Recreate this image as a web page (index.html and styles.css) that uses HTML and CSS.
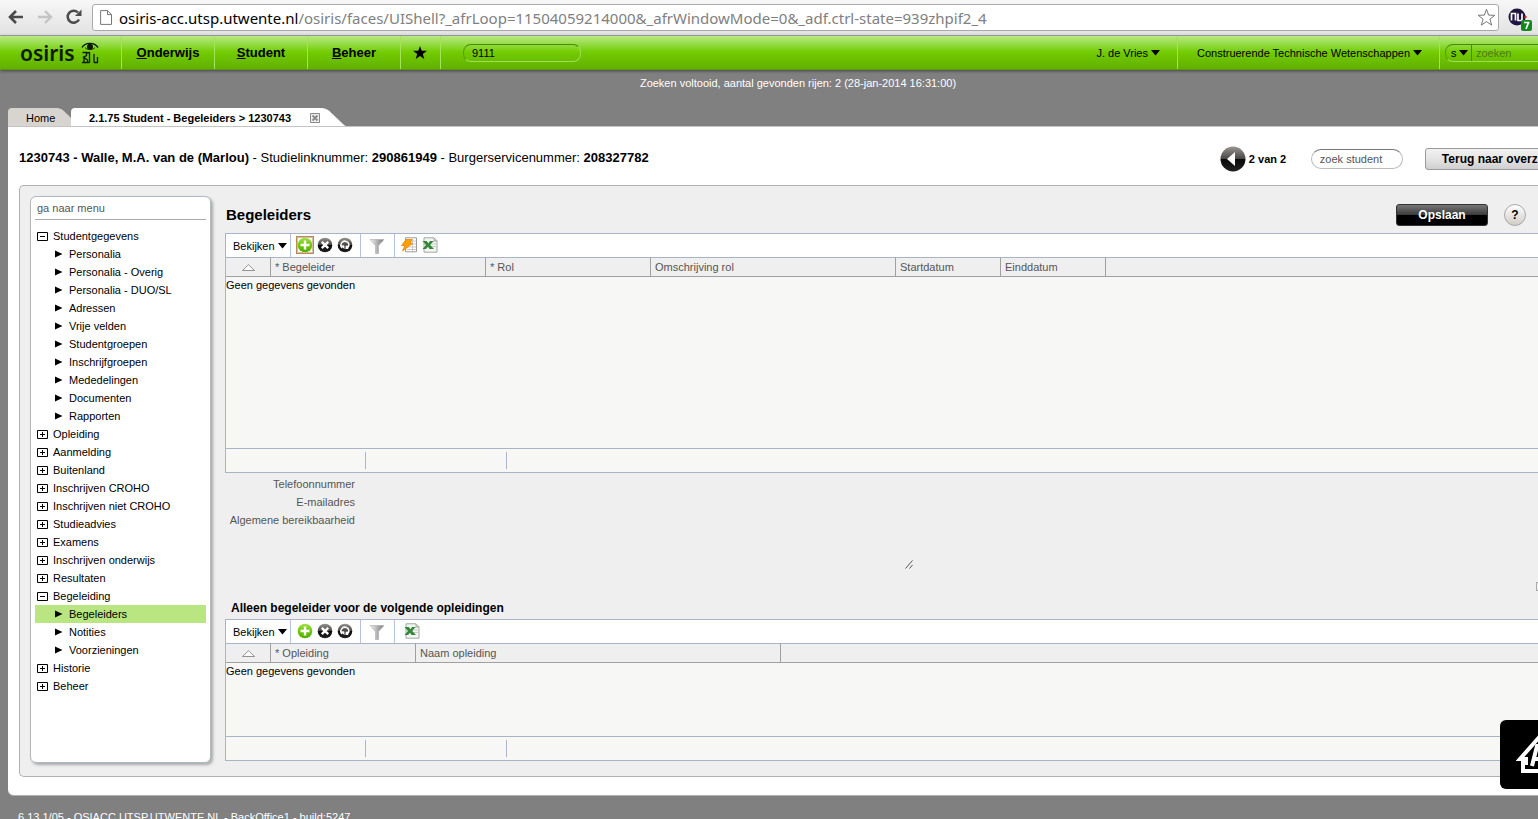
FILE: index.html
```html
<!DOCTYPE html>
<html lang="nl">
<head>
<meta charset="utf-8">
<title>Osiris - Begeleiders</title>
<link rel="stylesheet" href="styles.css">
</head>
<body>
<svg class="defs" aria-hidden="true">
  <defs>
    <linearGradient id="gGreen" x1="0" y1="0" x2="0" y2="1"><stop offset="0" stop-color="#a4e04e"/><stop offset=".5" stop-color="#6cc80c"/><stop offset="1" stop-color="#4fae00"/></linearGradient>
    <linearGradient id="gBlack" x1="0" y1="0" x2="0" y2="1"><stop offset="0" stop-color="#9a9692"/><stop offset=".48" stop-color="#4a4846"/><stop offset=".52" stop-color="#0a0a0a"/><stop offset="1" stop-color="#222"/></linearGradient>
    <linearGradient id="gFunnel"><stop offset="0" stop-color="#f4f4f4"/><stop offset=".5" stop-color="#b4b4b4"/><stop offset="1" stop-color="#777"/></linearGradient>
  </defs>
  <symbol id="i-add" viewBox="0 0 16 16"><circle cx="8" cy="8" r="7.300" fill="url(#gGreen)"/><path d="M8 3.500v9M3.500 8h9" stroke="#fff" stroke-width="2.400"/></symbol>
  <symbol id="i-del" viewBox="0 0 16 16"><circle cx="8" cy="8" r="7.300" fill="url(#gBlack)"/><path d="M4.800 4.800l6.400 6.400M11.200 4.800l-6.400 6.400" stroke="#fff" stroke-width="2.400"/></symbol>
  <symbol id="i-undo" viewBox="0 0 16 16"><circle cx="8" cy="8" r="7.300" fill="url(#gBlack)"/><path d="M5.200 11A3.900 3.900 0 1 1 11.500 9.500" fill="none" stroke="#fff" stroke-width="1.500"/><path d="M3.500 8.300h4v4z M8.500 8.500h4l-1.500 3.500h-2.500z" fill="#fff"/></symbol>
  <symbol id="i-filter" viewBox="0 0 16 16"><path d="M1 1.500h14l-5.500 6v8h-3v-8z" fill="url(#gFunnel)" stroke="#aaa" stroke-width=".6"/></symbol>
  <symbol id="i-flash" viewBox="0 0 16 16"><path d="M4.500.8h11v14h-11z" fill="#fff" stroke="#9a9a9a"/><path d="M6 4h9M6 7h9M6 10h9M6 12.500h9M11.500 2v12" stroke="#c8c8c8"/><path d="M5 2.500h6L9 6.500h2.500L1.500 14l2.500-5.500H.5z" fill="#ffa200" stroke="#e87800" stroke-width=".7"/></symbol>
  <symbol id="i-xls" viewBox="0 0 16 16"><path d="M2 .8h10l3 3v11.400H2z" fill="#f4f5f3" stroke="#a3a7a3"/><path d="M12 .8v3h3" fill="none" stroke="#a3a7a3"/><path d="M8.500 4.500H14M8.500 7H14M8.500 9.500H14" stroke="#c5cfc5"/><path d="M.5 4h4.200l1.800 2.200L8 4h3.500L8.200 8l3.800 4H7.500L6 9.800 4 12H.5L4 8z" fill="#35883a"/></symbol>
  <symbol id="i-caret" viewBox="0 0 9 6"><path d="M0 0h9L4.500 5.500z" fill="currentColor"/></symbol>
  <symbol id="i-leaf" viewBox="0 0 8 8"><path d="M0 .5v7L7.500 4z"/></symbol>
  <symbol id="i-plus" viewBox="0 0 11 9"><path d="M.5.5h10v8H.5z" fill="#fff" stroke="#000"/><path d="M3 4.500h5M5.500 2v5" stroke="#000"/></symbol>
  <symbol id="i-minus" viewBox="0 0 11 9"><path d="M.5.5h10v8H.5z" fill="#fff" stroke="#000"/><path d="M3 4.500h5" stroke="#000"/></symbol>
  <symbol id="i-sort" viewBox="0 0 13 7"><path d="M.5 6.500L6.500.7l6 5.800z" fill="#fff" stroke="#777" stroke-width=".8"/></symbol>
</svg>

<div class="browser">
  <button class="bnav" aria-label="Terug"><svg width="16" height="14" viewBox="0 0 16 14"><path d="M8 1L2 7l6 6M2 7h13" fill="none" stroke="#4b4b4b" stroke-width="2.600"/></svg></button>
  <button class="bnav" aria-label="Vooruit"><svg width="16" height="14" viewBox="0 0 16 14"><path d="M8 1l6 6-6 6M14 7H1" fill="none" stroke="#c4c4c4" stroke-width="2.400"/></svg></button>
  <button class="bnav" aria-label="Vernieuwen"><svg width="16" height="16" viewBox="0 0 16 16"><path d="M13 10.500A6 6 0 1 1 12 3.500" fill="none" stroke="#4b4b4b" stroke-width="2.500"/><path d="M15.500.5v6.500H9z" fill="#4b4b4b"/></svg></button>
  <div class="address">
    <svg width="12" height="15" viewBox="0 0 12 15"><path d="M.6.600h6.900l4 4v9.800H.6zM7.500.600v4h4" fill="#fff" stroke="#777"/></svg>
    <p class="url"><span>osiris-acc.utsp.utwente.nl</span>/osiris/faces/UIShell?_afrLoop=11504059214000&amp;_afrWindowMode=0&amp;_adf.ctrl-state=939zhpif2_4</p>
    <svg width="19" height="19" viewBox="0 0 19 19"><path d="M9.500 1.200l2.100 5.900 6.200.2-4.900 3.800 1.800 6-5.200-3.500-5.200 3.500 1.800-6L1.200 7.300l6.200-.2z" fill="#fff" stroke="#777" stroke-linejoin="round"/></svg>
  </div>
  <svg class="ext" width="26" height="24" viewBox="0 0 26 24"><circle cx="9" cy="9" r="8.500" fill="#201540"/><path d="M3.500 12.500v-7h4v7M10 5.500v7h4v-7" fill="none" stroke="#fff" stroke-width="1.700"/><circle cx="17.500" cy="9" r="1.200" fill="#e8212a"/><rect x="13" y="12" width="11" height="11" rx="2" fill="#118a1a"/><path d="M16 14.500h4.500l-2.500 6.500" fill="none" stroke="#fff" stroke-width="1.700"/></svg>
</div>

<div class="app">
  <header class="top">
    <a class="logo" href="#">osiris<svg width="18" height="22" viewBox="0 0 18 22"><path d="M1 5.500C4 .5 13-.5 17 5.500" fill="none" stroke="#0b1a00" stroke-width="1.400"/><circle cx="9" cy="4.800" r="3" fill="#0b1a00"/><path d="M4 5.500c2 2.800 8 2.800 10 0" fill="none" stroke="#0b1a00" stroke-width=".8"/><path d="M1.500 10.500h4v3l-3 1.500 4 3v2.500M3 15.500v4.500M8.500 10v10.500M5.500 11l3-.5M13 12v8.500M16.500 15v5.500M1 20.500h7.500M13 20.500h4" fill="none" stroke="#0b1a00" stroke-width="1.300"/></svg></a>
    <nav class="nav">
      <a href="#"><u>O</u>nderwijs</a>
      <a href="#"><u>S</u>tudent</a>
      <a href="#"><u>B</u>eheer</a>
      <a class="fav" href="#" aria-label="Favorieten"><svg width="14" height="13" viewBox="0 0 14 13"><path d="M7 0l1.700 4.800H14L9.800 7.900l1.500 5L7 9.900l-4.300 3 1.500-5L0 4.800h5.300z"/></svg></a>
    </nav>
    <input class="code" type="text" value="9111" aria-label="Schermcode">
    <div class="user">
      <button>J. de Vries <svg class="caret"><use href="#i-caret"/></svg></button>
      <button>Construerende Technische Wetenschappen <svg class="caret"><use href="#i-caret"/></svg></button>
      <div class="find">
        <label class="kind"><select aria-label="Zoeken in"><option>s</option></select><svg class="caret"><use href="#i-caret"/></svg></label>
        <input type="text" placeholder="zoeken" aria-label="Zoeken">
      </div>
    </div>
  </header>

  <p class="status">Zoeken voltooid, aantal gevonden rijen: 2 (28-jan-2014 16:31:00)</p>

  <div class="tabs">
    <a class="tab home" href="#"><span>Home</span><svg width="14" height="18" viewBox="0 0 14 18"><path d="M0 0C5 0 8 4 14 10V18H0z"/></svg></a>
    <div class="tab active"><a href="#">2.1.75 Student - Begeleiders &gt; 1230743</a><button aria-label="Tabblad sluiten"><svg width="10" height="10" viewBox="0 0 10 10"><path class="x" d="M.5.5h9v9h-9z" stroke="#888"/><path d="M2.500 2.500l5 5M7.500 2.500l-5 5" stroke="#888" stroke-width="1.800"/></svg></button><svg width="25" height="18" viewBox="0 0 25 18"><path d="M0 0C7 0 9 4 12 6.500L22 16Q24 18 25 18H0z"/></svg></div>
  </div>

  <div class="sheet">
    <div class="record">
      <p class="who"><b>1230743 - Walle, M.A. van de (Marlou)</b> - Studielinknummer: <b>290861949</b> - Burgerservicenummer: <b>208327782</b></p>
      <button class="prev" aria-label="Vorige"><svg width="26" height="26" viewBox="0 0 26 26"><circle cx="13" cy="13" r="12.500" fill="url(#gBlack)"/><path d="M7 13l8-7v14z" fill="#fff"/></svg></button>
      <b class="pos">2 van 2</b>
      <input class="zoek" type="text" placeholder="zoek student" aria-label="Zoek student">
      <button class="back">Terug naar overzicht</button>
    </div>

    <div class="panel">
      <aside class="side">
        <input class="goto" type="text" placeholder="ga naar menu" aria-label="Ga naar menu">
        <ul class="tree">
          <li><a href="#"><svg class="box"><use href="#i-minus"/></svg>Studentgegevens</a>
            <ul>
              <li><a href="#"><svg class="leaf"><use href="#i-leaf"/></svg>Personalia</a></li>
              <li><a href="#"><svg class="leaf"><use href="#i-leaf"/></svg>Personalia - Overig</a></li>
              <li><a href="#"><svg class="leaf"><use href="#i-leaf"/></svg>Personalia - DUO/SL</a></li>
              <li><a href="#"><svg class="leaf"><use href="#i-leaf"/></svg>Adressen</a></li>
              <li><a href="#"><svg class="leaf"><use href="#i-leaf"/></svg>Vrije velden</a></li>
              <li><a href="#"><svg class="leaf"><use href="#i-leaf"/></svg>Studentgroepen</a></li>
              <li><a href="#"><svg class="leaf"><use href="#i-leaf"/></svg>Inschrijfgroepen</a></li>
              <li><a href="#"><svg class="leaf"><use href="#i-leaf"/></svg>Mededelingen</a></li>
              <li><a href="#"><svg class="leaf"><use href="#i-leaf"/></svg>Documenten</a></li>
              <li><a href="#"><svg class="leaf"><use href="#i-leaf"/></svg>Rapporten</a></li>
            </ul>
          </li>
          <li><a href="#"><svg class="box"><use href="#i-plus"/></svg>Opleiding</a></li>
          <li><a href="#"><svg class="box"><use href="#i-plus"/></svg>Aanmelding</a></li>
          <li><a href="#"><svg class="box"><use href="#i-plus"/></svg>Buitenland</a></li>
          <li><a href="#"><svg class="box"><use href="#i-plus"/></svg>Inschrijven CROHO</a></li>
          <li><a href="#"><svg class="box"><use href="#i-plus"/></svg>Inschrijven niet CROHO</a></li>
          <li><a href="#"><svg class="box"><use href="#i-plus"/></svg>Studieadvies</a></li>
          <li><a href="#"><svg class="box"><use href="#i-plus"/></svg>Examens</a></li>
          <li><a href="#"><svg class="box"><use href="#i-plus"/></svg>Inschrijven onderwijs</a></li>
          <li><a href="#"><svg class="box"><use href="#i-plus"/></svg>Resultaten</a></li>
          <li><a href="#"><svg class="box"><use href="#i-minus"/></svg>Begeleiding</a>
            <ul>
              <li><a class="current" href="#"><svg class="leaf"><use href="#i-leaf"/></svg>Begeleiders</a></li>
              <li><a href="#"><svg class="leaf"><use href="#i-leaf"/></svg>Notities</a></li>
              <li><a href="#"><svg class="leaf"><use href="#i-leaf"/></svg>Voorzieningen</a></li>
            </ul>
          </li>
          <li><a href="#"><svg class="box"><use href="#i-plus"/></svg>Historie</a></li>
          <li><a href="#"><svg class="box"><use href="#i-plus"/></svg>Beheer</a></li>
        </ul>
      </aside>

      <main class="main">
        <div class="title">
          <h1>Begeleiders</h1>
          <button class="save">Opslaan</button>
          <button class="help" aria-label="Help">?</button>
        </div>

        <section class="grid">
          <div class="bar">
            <div class="group menu"><button>Bekijken <svg class="caret"><use href="#i-caret"/></svg></button></div>
            <div class="group acts">
              <button class="focus" aria-label="Toevoegen"><svg><use href="#i-add"/></svg></button>
              <button aria-label="Verwijderen"><svg><use href="#i-del"/></svg></button>
              <button aria-label="Herstellen"><svg><use href="#i-undo"/></svg></button>
            </div>
            <div class="group flt"><button aria-label="Filter"><svg><use href="#i-filter"/></svg></button></div>
            <div class="group exp">
              <button aria-label="Actie"><svg><use href="#i-flash"/></svg></button>
              <button aria-label="Exporteren naar Excel"><svg><use href="#i-xls"/></svg></button>
            </div>
          </div>
          <table>
            <colgroup><col class="c45"><col class="c215"><col class="c165"><col class="c245"><col class="c105"><col class="c105"><col></colgroup>
            <thead><tr><th class="sort"><svg><use href="#i-sort"/></svg></th><th><i>*</i> Begeleider</th><th><i>*</i> Rol</th><th>Omschrijving rol</th><th>Startdatum</th><th>Einddatum</th><th></th></tr></thead>
            <tbody><tr><td class="tall" colspan="7">Geen gegevens gevonden</td></tr></tbody>
          </table>
          <div class="foot"><span></span><span></span></div>
        </section>

        <dl class="fields">
          <dt>Telefoonnummer</dt><dd></dd>
          <dt>E-mailadres</dt><dd></dd>
          <dt><label for="bereik">Algemene bereikbaarheid</label></dt>
          <dd><textarea id="bereik"></textarea><svg class="grip" width="9" height="9" viewBox="0 0 9 9"><path d="M.5 8.500l7-8M4.500 8.500l3-3.500" stroke="#555" fill="none"/></svg></dd>
        </dl>
        <div class="more"><button aria-label="Uitklappen"></button></div>

        <h2>Alleen begeleider voor de volgende opleidingen</h2>
        <section class="grid">
          <div class="bar">
            <div class="group menu"><button>Bekijken <svg class="caret"><use href="#i-caret"/></svg></button></div>
            <div class="group acts">
              <button aria-label="Toevoegen"><svg><use href="#i-add"/></svg></button>
              <button aria-label="Verwijderen"><svg><use href="#i-del"/></svg></button>
              <button aria-label="Herstellen"><svg><use href="#i-undo"/></svg></button>
            </div>
            <div class="group flt"><button aria-label="Filter"><svg><use href="#i-filter"/></svg></button></div>
            <div class="group exp single"><button aria-label="Exporteren naar Excel"><svg><use href="#i-xls"/></svg></button></div>
          </div>
          <table>
            <colgroup><col class="c45"><col class="c145"><col class="c365"><col></colgroup>
            <thead><tr><th class="sort"><svg><use href="#i-sort"/></svg></th><th><i>*</i> Opleiding</th><th>Naam opleiding</th><th></th></tr></thead>
            <tbody><tr><td class="short" colspan="4">Geen gegevens gevonden</td></tr></tbody>
          </table>
          <div class="foot"><span></span><span></span></div>
        </section>
      </main>
    </div>
  </div>
  <footer class="version">6.13.1/05 - OSIACC.UTSP.UTWENTE.NL - BackOffice1 - build:5247</footer>
</div>

<div class="badge"><svg width="52" height="44" viewBox="0 0 52 44"><path d="M26 2L4 27h6v4H7v8h38v-8h-3v-4h6z" fill="none" stroke="#fff" stroke-width="4"/><path d="M16 34l5-20h4l2 20M18 27h8" fill="none" stroke="#fff" stroke-width="4"/></svg></div>
</body>
</html>
```
FILE: styles.css
```css
* { box-sizing: border-box; }
body {
  margin: 0;
  height: 100vh;
  overflow: hidden;
  background: #808080;
  color: #000;
  font: 11px/18px "Liberation Sans", Arial, sans-serif;
}
p, h1, h2, ul, dl, dd { margin: 0; padding: 0; }
ul { list-style: none; }
a { color: inherit; text-decoration: none; }
button, input, select, textarea { font: inherit; color: inherit; margin: 0; }
button { border: 0; padding: 0; background: none; }
svg { display: block; flex: none; }
.defs { position: absolute; width: 0; height: 0; }

/* browser bar */
.browser {
  display: flex;
  align-items: center;
  height: 36px;
  padding: 0 0 2px 8px;
  background: linear-gradient(#f7f7f7, #e2e2e2);
  border-bottom: 1px solid #a8a4ac;
}
.bnav { width: 29px; flex: none; }
.address {
  flex: 1;
  display: flex;
  align-items: center;
  height: 27px;
  margin: 2px 7px 0 -3px;
  padding: 0 2px 0 7px;
  background: #fff;
  border: 1px solid #a9a9a9;
  border-radius: 3px;
}
.url {
  flex: 1;
  padding-left: 7px;
  color: #808080;
  font: 15px/24px "Noto Sans", sans-serif;
  white-space: nowrap;
}
.url span { color: #000; }
.ext { margin: 6px 4px 0 2px; }

/* application header */
.app { width: calc(100% + 58px); }
.top {
  display: flex;
  align-items: center;
  height: 34px;
  padding: 0 12px 0 20px;
  background: linear-gradient(#b9e986, #8fda3c 28%, #72cb00 50%, #62b000);
  border-bottom: 1px solid #5a9a10;
  box-shadow: 0 1px 3px #444;
}
.logo {
  display: flex;
  align-items: center;
  gap: 6px;
  width: 101px;
  color: #0b1a00;
  font: 600 21px/30px "Noto Sans", sans-serif;
}
.nav { display: flex; }
.nav a {
  display: flex;
  align-items: center;
  justify-content: center;
  width: 93px;
  height: 33px;
  padding-top: 1px;
  border-left: 1px solid #a5e25a;
  font-size: 13px;
  font-weight: bold;
}
.nav .fav { width: 41px; padding: 0 2px 0 0; border-right: 1px solid #a5e25a; }
.code {
  width: 118px;
  height: 18px;
  margin-left: 22px;
  padding: 0 8px;
  border: 1px solid #9fdd55;
  border-top-color: #4a8a00;
  border-left-color: #5c9a14;
  border-radius: 8px;
  background: none;
}
.user { display: flex; align-items: center; margin-left: auto; }
.user button {
  display: flex;
  align-items: center;
  gap: 3px;
  height: 33px;
  padding: 0 17px 0 19px;
  border-right: 1px solid #a5e25a;
}
.caret { width: 9px; height: 6px; }
.find {
  display: flex;
  width: 139px;
  height: 18px;
  margin-left: 5px;
  border: 1px solid #9fdd55;
  border-top-color: #4a8a00;
  border-left-color: #5c9a14;
  border-radius: 8px;
  overflow: hidden;
}
.kind { display: flex; align-items: center; border-right: 1px solid #4a8a00; padding: 0 3px 0 5px; }
.kind select { appearance: none; width: 8px; border: 0; padding: 0; background: none; }
.find input { width: 100px; border: 0; padding: 0 4px; background: none; }
.find ::placeholder { color: #4d7a1e; }

.status { height: 38px; padding-top: 4px; color: #fff; text-align: center; }

/* tabs */
.tabs { display: flex; padding-left: 8px; height: 18px; }
.tab { display: flex; height: 18px; line-height: 20px; }
.home { width: 63px; }
.home span { flex: 1; padding-left: 18px; background: #d8d5d0; border-radius: 4px 0 0 0; }
.home path { fill: #d8d5d0; }
.active a { padding: 0 19px 0 18px; background: #fff; border-radius: 4px 0 0 0; font-weight: bold; }
.active button { background: #fff; padding: 2px 1px 0 0; }
.active path { fill: #fff; }
.active .x { fill: #eee; }

/* record sheet */
.sheet {
  margin-left: 8px;
  padding: 0 0 18px 11px;
  background: #fff;
  border-top: 1px solid #c4c4c4;
  border-bottom: 1px solid #b0b0b0;
  border-radius: 0 0 0 6px;
}
.record {
  display: flex;
  align-items: center;
  height: 58px;
  padding: 6px 20px 0 0;
}
.who { flex: 1; font-size: 13px; padding-bottom: 2px; }
.pos { width: 60px; margin-left: 3px; }
.zoek {
  width: 92px;
  height: 20px;
  margin: 0 22px 0 2px;
  padding: 0 8px;
  border: 1px solid #bbb;
  border-top-color: #777;
  border-radius: 10px;
}
.zoek::placeholder, .goto::placeholder { color: #555; }
.back {
  height: 22px;
  padding: 0 16px;
  background: linear-gradient(#f2f2f2, #e4e4e4 50%, #cfcfcf);
  border: 1px solid #999;
  border-radius: 3px;
  font-size: 12px;
  font-weight: bold;
}
.panel {
  display: flex;
  gap: 14px;
  padding: 10px 0 13px 10px;
  background: #efefef;
  border: 1px solid #b0b0b0;
  border-right: 0;
  border-radius: 5px 0 0 5px;
}

/* menu */
.side {
  width: 181px;
  padding: 2px 4px;
  background: #fff;
  border: 1px solid #b0b8c0;
  border-radius: 6px;
  box-shadow: 2px 2px 3px #aaa;
}
.goto {
  width: 100%;
  height: 21px;
  padding: 0 2px 2px;
  border: 0;
  border-bottom: 1px solid #aaa;
  background: none;
}
.tree { padding-top: 7px; }
.tree a { display: flex; align-items: center; gap: 5px; height: 18px; padding-left: 2px; }
.tree ul a { gap: 6px; padding-left: 20px; }
.tree .current { background: #b9e681; }
.box { width: 11px; height: 9px; }
.leaf { width: 8px; height: 8px; }

/* content */
.main { flex: 1; min-width: 0; padding-bottom: 2px; }
.title { display: flex; align-items: center; height: 37px; padding: 0 70px 0 1px; }
h1 { flex: 1; font-size: 15px; }
.save {
  width: 92px;
  height: 22px;
  border: 1px solid #333;
  border-radius: 3px;
  background: linear-gradient(#777, #3c3c3c 48%, #000 52%);
  color: #fff;
  font-size: 12px;
  font-weight: bold;
}
.help {
  width: 22px;
  height: 22px;
  margin-left: 16px;
  border: 1px solid #a9a9a9;
  border-radius: 50%;
  background: linear-gradient(#fff, #d0ccc8);
  font-size: 12px;
  font-weight: bold;
}
.grid { border: 1px solid #a9b4c6; border-right: 0; background: #f7f7f5; }
.bar { display: flex; height: 23px; background: #fff; }
.group { display: flex; align-items: center; padding-bottom: 2px; border-right: 1px solid #b4c0dc; }
.group svg { width: 16px; height: 16px; }
.group .caret { width: 9px; height: 6px; }
.menu { width: 65px; padding: 0 0 0 7px; }
.menu button { display: flex; align-items: center; gap: 3px; }
.acts { width: 70px; gap: 2px; padding-left: 5px; }
.acts button { border: 1px solid transparent; }
.acts .focus { border-color: #b98a5a; outline: 1px solid #d9bd9c; outline-offset: -2px; }
.flt { width: 34px; padding: 0 0 0 8px; }
.exp { gap: 5px; padding-left: 6px; border-right: 0; }
.single { padding-left: 9px; }
table { width: 100%; table-layout: fixed; border-collapse: separate; border-spacing: 0; }
.c45 { width: 45px; }
.c105 { width: 105px; }
.c145 { width: 145px; }
.c165 { width: 165px; }
.c215 { width: 215px; }
.c245 { width: 245px; }
.c365 { width: 365px; }
th {
  height: 20px;
  padding: 0 4px;
  background: #efefef;
  border: solid #a0a0a0;
  border-width: 1px 1px 1px 0;
  border-top-color: #a9b4c6;
  color: #555;
  font-weight: normal;
  text-align: left;
}
th:last-child { border-right: 0; }
th i { font-style: normal; color: #3a5a80; }
.sort svg { width: 13px; height: 7px; margin: 0 auto; }
td { padding: 0; line-height: 16px; vertical-align: top; }
.tall { height: 171px; }
.short { height: 73px; }
.foot { display: flex; height: 24px; padding: 3px 0; border-top: 1px solid #a9b4c6; }
.foot span { width: 140px; border-right: 1px solid #a9b4c6; }
.foot span + span { width: 141px; }

.fields { display: grid; grid-template-columns: 130px 1fr; grid-template-rows: 18px 18px auto; column-gap: 4px; padding-top: 2px; color: #555; }
dt { text-align: right; }
dd { position: relative; width: 555px; }
textarea { display: block; width: 100%; height: 59px; border: 0; background: none; resize: none; }
.grip { position: absolute; right: 0; bottom: 1px; }
.more { display: flex; justify-content: flex-end; padding: 12px 51px 0 0; height: 28px; }
.more button { width: 9px; height: 9px; border: 1px solid #aaa; }
h2 { padding: 0 6px; font-size: 12px; line-height: 21px; }

.version { padding: 12px 18px 0; color: #fff; }
.badge {
  position: fixed;
  top: 720px;
  right: -32px;
  width: 70px;
  padding: 12px 0 13px 16px;
  background: #000;
  border-radius: 6px;
}
```
